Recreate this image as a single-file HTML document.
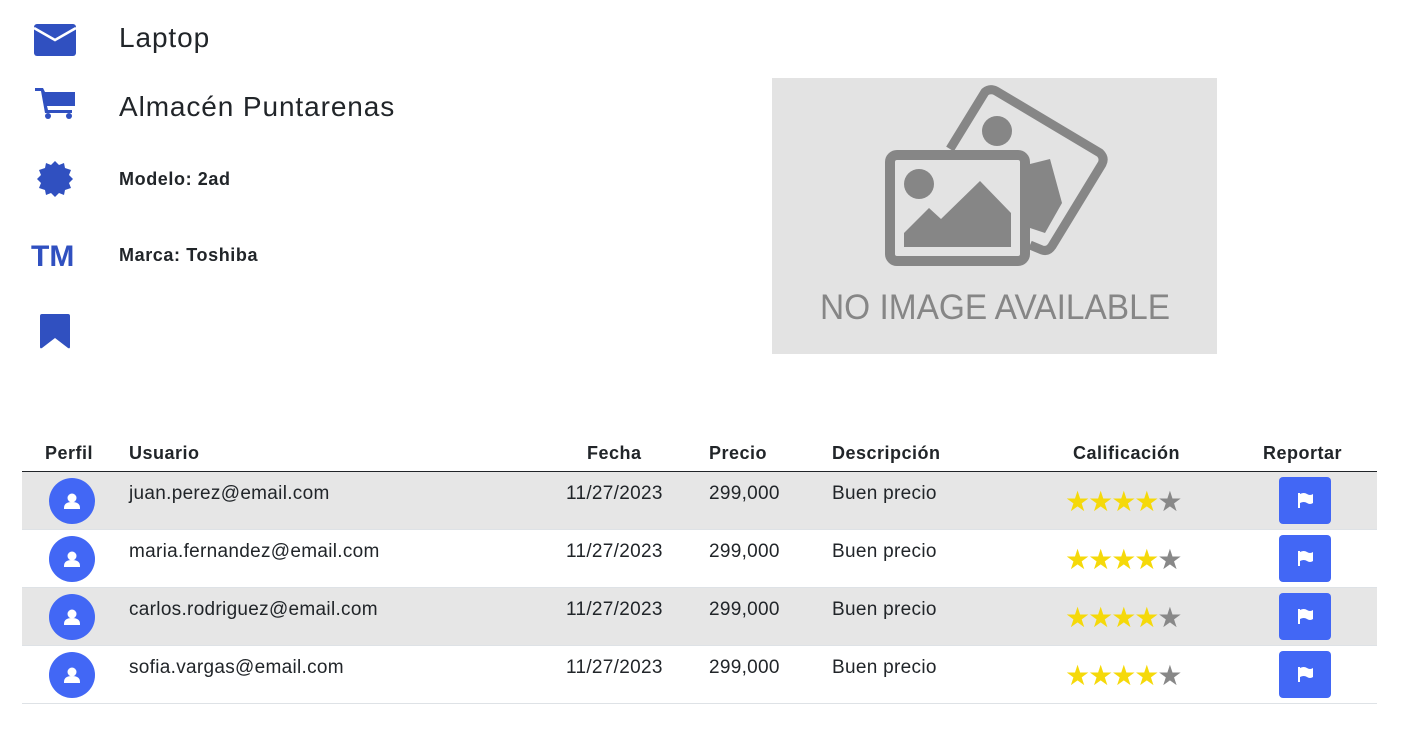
<!DOCTYPE html>
<html><head><meta charset="utf-8"><style>
*{margin:0;padding:0;box-sizing:border-box}
body{width:1411px;height:734px;background:#fff;font-family:"Liberation Sans",sans-serif;color:#212529;position:relative;overflow:hidden}
.a{position:absolute;white-space:nowrap}
.t1{font-size:28px;font-weight:500;letter-spacing:0.9px}
.t2{font-size:18px;font-weight:600;letter-spacing:0.6px}
.h{font-size:18px;font-weight:700;top:443px;letter-spacing:0.5px}
.row{position:absolute;left:22px;width:1355px;height:58px;border-bottom:1px solid #dee2e6}
.c{font-size:19px;position:absolute;top:11px;letter-spacing:0.3px}
.av{position:absolute;left:27px;top:6px;width:46px;height:46px;border-radius:50%;background:#4267f5}
.st{position:absolute;left:1043px;top:13px;font-size:28px;letter-spacing:-2px;color:#f5d90a}
.st span{color:#888}
.btn{position:absolute;left:1257px;top:5px;width:52px;height:47px;background:#4267f5;border-radius:4px}
</style></head><body>
<svg class="a" style="left:34px;top:24px" width="42" height="32" viewBox="0 0 42 32"><rect x="0" y="0" width="42" height="32" rx="3" fill="#3050c0"/><path d="M0 4 L21 16 L42 4" stroke="#fff" stroke-width="2.5" fill="none"/></svg>
<div class="a t1" style="left:119px;top:22px">Laptop</div>
<svg class="a" style="left:35px;top:86px" width="40" height="34" viewBox="0 0 40 34"><path d="M0 2 H8 L10 6 H40 V20 H12 L13 24 H37 V27 H10 L6 5 H0 Z" fill="#3050c0"/><circle cx="13" cy="30" r="3" fill="#3050c0"/><circle cx="34" cy="30" r="3" fill="#3050c0"/></svg>
<div class="a t1" style="left:119px;top:91px">Almacén Puntarenas</div>
<svg class="a" style="left:36px;top:160px" width="38" height="38" viewBox="-19 -19 38 38"><polygon fill="#3050c0" points="0,-18 4,-14 9,-16 10,-11 16,-9 14,-4 18,0 14,4 16,9 10,11 9,16 4,14 0,18 -4,14 -9,16 -10,11 -16,9 -14,4 -18,0 -14,-4 -16,-9 -10,-11 -9,-16 -4,-14"/></svg>
<div class="a t2" style="left:119px;top:169px">Modelo: 2ad</div>
<div class="a" style="left:31px;top:240px;font-size:30px;font-weight:700;color:#3050c0;letter-spacing:0px">TM</div>
<div class="a t2" style="left:119px;top:245px">Marca: Toshiba</div>
<svg class="a" style="left:40px;top:314px" width="30" height="35" viewBox="0 0 30 35"><path d="M2 0 H28 Q30 0 30 2 V33 Q30 35 28 34 L15 24 L2 34 Q0 35 0 33 V2 Q0 0 2 0Z" fill="#3050c0"/></svg>
<svg class="a" style="left:772px;top:78px" width="445" height="276" viewBox="0 0 445 276"><rect width="445" height="276" fill="#e3e3e3"/>
<path d="M178 71 L213 14 Q218 10 224 13 L328 75 Q333 80 330 86 L280 168 Q276 174 270 172 L258 167" stroke="#868686" stroke-width="9" fill="none" stroke-linejoin="round"/>
<circle cx="225" cy="53" r="15" fill="#868686"/>
<polygon points="258,86 278,81 290,125 273,155 258,150" fill="#868686"/>
<rect x="118" y="77" width="135" height="106" rx="7" stroke="#868686" stroke-width="10" fill="#e3e3e3"/>
<circle cx="147" cy="106" r="15" fill="#868686"/>
<polygon points="132,155 157,130 169,141 208,103 239,135 239,169 132,169" fill="#868686"/>
<text x="223" y="241" text-anchor="middle" font-family="Liberation Sans" font-size="35" fill="#868686" textLength="350" lengthAdjust="spacingAndGlyphs">NO IMAGE AVAILABLE</text></svg>
<div class="a h" style="left:45px">Perfil</div>
<div class="a h" style="left:129px">Usuario</div>
<div class="a h" style="left:587px">Fecha</div>
<div class="a h" style="left:709px">Precio</div>
<div class="a h" style="left:832px">Descripción</div>
<div class="a h" style="left:1073px">Calificación</div>
<div class="a h" style="left:1263px">Reportar</div>
<div class="a" style="left:22px;top:471px;width:1355px;height:1px;background:#212529"></div>
<div class="row" style="top:472px;background:#e6e6e6"><div class="av"><svg width="46" height="46"><circle cx="23" cy="20" r="4.5" fill="#fff"/><path d="M15 30 Q15 24 23 24 Q31 24 31 30 V31 H15Z" fill="#fff"/></svg></div><div class="c" style="left:107px">juan.perez@email.com</div><div class="c" style="left:544px">11/27/2023</div><div class="c" style="left:687px">299,000</div><div class="c" style="left:810px">Buen precio</div><div class="st">★★★★<span>★</span></div><div class="btn"><svg width="52" height="47"><path d="M20 16 V31" stroke="#fff" stroke-width="2"/><path d="M21 17 Q25 15 28 17 Q31 19 34 17 V26 Q31 28 28 26 Q25 24 21 26Z" fill="#fff"/></svg></div></div>
<div class="row" style="top:530px"><div class="av"><svg width="46" height="46"><circle cx="23" cy="20" r="4.5" fill="#fff"/><path d="M15 30 Q15 24 23 24 Q31 24 31 30 V31 H15Z" fill="#fff"/></svg></div><div class="c" style="left:107px">maria.fernandez@email.com</div><div class="c" style="left:544px">11/27/2023</div><div class="c" style="left:687px">299,000</div><div class="c" style="left:810px">Buen precio</div><div class="st">★★★★<span>★</span></div><div class="btn"><svg width="52" height="47"><path d="M20 16 V31" stroke="#fff" stroke-width="2"/><path d="M21 17 Q25 15 28 17 Q31 19 34 17 V26 Q31 28 28 26 Q25 24 21 26Z" fill="#fff"/></svg></div></div>
<div class="row" style="top:588px;background:#e6e6e6"><div class="av"><svg width="46" height="46"><circle cx="23" cy="20" r="4.5" fill="#fff"/><path d="M15 30 Q15 24 23 24 Q31 24 31 30 V31 H15Z" fill="#fff"/></svg></div><div class="c" style="left:107px">carlos.rodriguez@email.com</div><div class="c" style="left:544px">11/27/2023</div><div class="c" style="left:687px">299,000</div><div class="c" style="left:810px">Buen precio</div><div class="st">★★★★<span>★</span></div><div class="btn"><svg width="52" height="47"><path d="M20 16 V31" stroke="#fff" stroke-width="2"/><path d="M21 17 Q25 15 28 17 Q31 19 34 17 V26 Q31 28 28 26 Q25 24 21 26Z" fill="#fff"/></svg></div></div>
<div class="row" style="top:646px"><div class="av"><svg width="46" height="46"><circle cx="23" cy="20" r="4.5" fill="#fff"/><path d="M15 30 Q15 24 23 24 Q31 24 31 30 V31 H15Z" fill="#fff"/></svg></div><div class="c" style="left:107px">sofia.vargas@email.com</div><div class="c" style="left:544px">11/27/2023</div><div class="c" style="left:687px">299,000</div><div class="c" style="left:810px">Buen precio</div><div class="st">★★★★<span>★</span></div><div class="btn"><svg width="52" height="47"><path d="M20 16 V31" stroke="#fff" stroke-width="2"/><path d="M21 17 Q25 15 28 17 Q31 19 34 17 V26 Q31 28 28 26 Q25 24 21 26Z" fill="#fff"/></svg></div></div>
</body></html>
